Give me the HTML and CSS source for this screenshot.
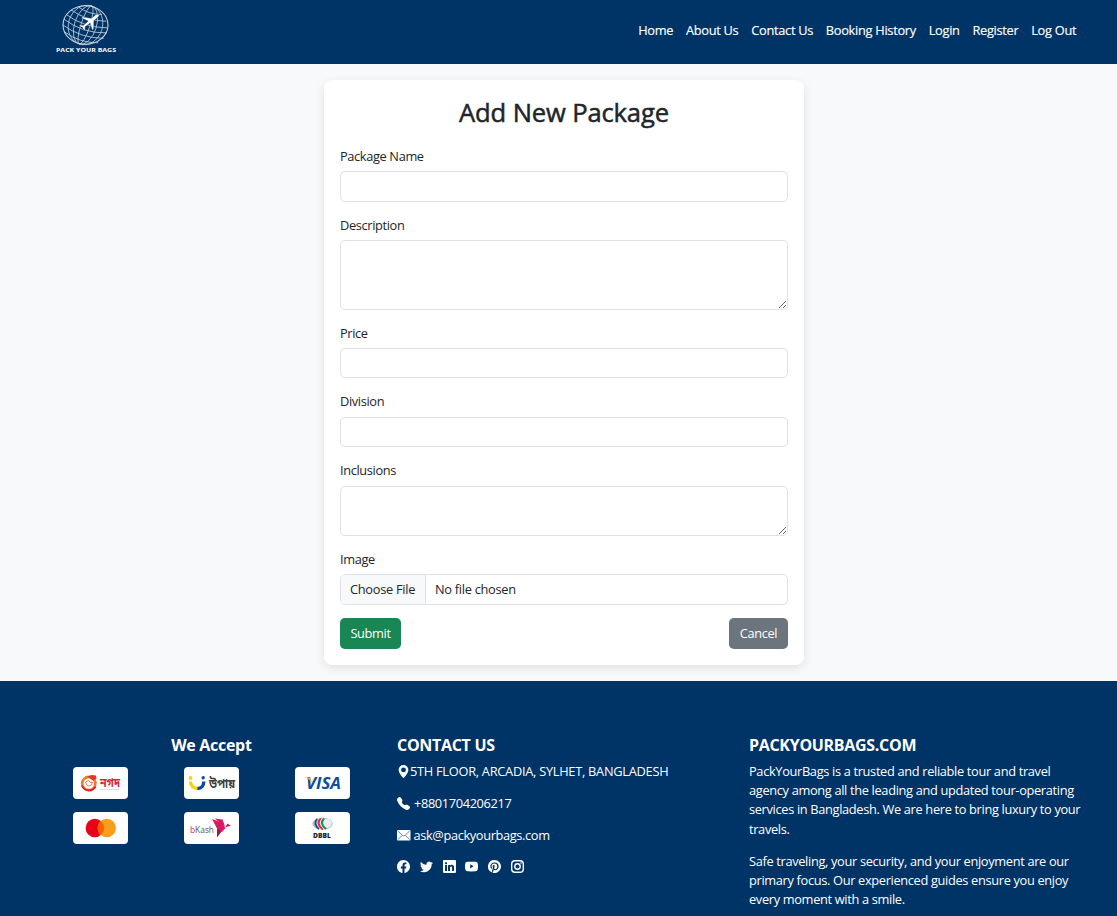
FILE: index.html
```html
<!DOCTYPE html>
<html lang="en">
<head>
<meta charset="utf-8">
<title>Add New Package</title>
<link rel="stylesheet" href="styles.css">
</head>
<body>
<header class="navbar">
  <svg class="brand" width="64" height="52" viewBox="0 0 64 52" aria-label="Pack Your Bags">
    <g fill="none" stroke="#c3d2e1" stroke-width=".75">
      <ellipse cx="32.500" cy="22" rx="22.500" ry="19.300" stroke-width="1.100"/>
      <g transform="rotate(18 32.500 22)">
        <ellipse cx="32.500" cy="22" rx="17" ry="20"/>
        <ellipse cx="32.500" cy="22" rx="11" ry="20"/>
        <ellipse cx="32.500" cy="22" rx="4.500" ry="20"/>
        <path d="M14 12q18 6 37 0M11 18q21 7 43 0M10 23q22 8 45 0M11 29q21 7 43 0M15 35q17 6 35 0M20 7q12 4 25 0"/>
      </g>
    </g>
    <path fill="#fff" stroke="#003366" stroke-width=".4" d="M46 11.500c-2-.6-3.600.3-5.200 1.800l-2.600 2-8.600-1.400-1.400 1 7 3.200-4.700 4.200-3.500-.2-.9.800 3.500 1.700 1.400 3.200 1-.7.200-3.300 5-3.700 1.900 7 1.600-1.100.2-8.500 2.600-2.100c1.700-1.400 3-2.700 2.500-3.900z"/>
    <text class="brand-text" x="3" y="49" textLength="60" lengthAdjust="spacingAndGlyphs">PACK YOUR BAGS</text>
  </svg>
  <nav class="nav">
    <a>Home</a><a>About Us</a><a>Contact Us</a><a>Booking History</a><a>Login</a><a>Register</a><a>Log Out</a>
  </nav>
</header>

<main class="main">
  <form class="card">
    <h2 class="title">Add New Package</h2>
    <div class="field"><label>Package Name</label><input class="control" type="text"></div>
    <div class="field"><label>Description</label><textarea class="control tall"></textarea></div>
    <div class="field"><label>Price</label><input class="control" type="text"></div>
    <div class="field"><label>Division</label><input class="control" type="text"></div>
    <div class="field"><label>Inclusions</label><textarea class="control short"></textarea></div>
    <div class="field"><label>Image</label>
      <div class="control file"><span class="choose">Choose File</span><span class="chosen">No file chosen</span></div>
    </div>
    <div class="actions"><button type="button" class="btn submit">Submit</button><button type="button" class="btn cancel">Cancel</button></div>
  </form>
</main>

<footer class="footer">
  <section class="col accept">
    <h5>We Accept</h5>
    <div class="logos">
      <svg class="logo" viewBox="0 0 55 32">
        <circle cx="15.800" cy="16.500" r="6.600" fill="#fff" stroke="#f07c22" stroke-width="2.600"/>
        <path d="M9 18.500a7.500 7.500 0 0 0 13.500 1.200" fill="none" stroke="#d9232e" stroke-width="1.800"/>
        <path d="M14.500 9.500l4-1.500 4.500.5.500 3.500-3.500 1.500-3-2z" fill="#e2352b"/>
        <path d="M12.500 15l3-1.500 2 2 2-.5-1 3-3 1-2-1.500z" fill="none" stroke="#ee6a4c" stroke-width=".9"/>
        <text class="bn red" x="27" y="20" textLength="20" lengthAdjust="spacingAndGlyphs">নগদ</text>
        <path d="M27 22.500h20" stroke="#bbb" stroke-width=".7" stroke-dasharray="1.500 .7"/>
      </svg>
      <svg class="logo" viewBox="0 0 55 32">
        <path d="M6.500 14.500c0 4 3 7 7.500 7" fill="none" stroke="#fbd205" stroke-width="3.300"/>
        <path d="M13.500 21.500c4.200 0 6.300-3 6.300-7" fill="none" stroke="#0b4ca0" stroke-width="3.300"/>
        <circle cx="6.500" cy="11" r="1.900" fill="#fbd205"/><circle cx="19.200" cy="10.800" r="1.700" fill="#0b4ca0"/>
        <text class="bn dark" x="25" y="20.800" textLength="26" lengthAdjust="spacingAndGlyphs">উপায়</text>
      </svg>
      <svg class="logo" viewBox="0 0 55 32">
        <text class="visa" x="11" y="21.700" textLength="35" lengthAdjust="spacingAndGlyphs">VISA</text>
        <path d="M9.500 10.500h4.300c1.200 0 1.700.5 2 1.500l.7 3.600c-1.500-2.600-3.800-4.200-7-5.100z" fill="#f5a21b"/>
      </svg>
      <svg class="logo" viewBox="0 0 55 32">
        <circle cx="21.800" cy="16" r="9.200" fill="#eb001b"/><circle cx="33.800" cy="16" r="9.200" fill="#f79e1b"/>
        <path d="M27.800 9a9.200 9.200 0 0 1 0 14 9.200 9.200 0 0 1 0-14z" fill="#ff5f00"/>
      </svg>
      <svg class="logo" viewBox="0 0 55 32">
        <text class="bkash" x="6" y="20.800" textLength="24" lengthAdjust="spacingAndGlyphs"><tspan fill="#e2136e">b</tspan>Kash</text>
        <path d="M28 7l12 4.500-1.500 5.500-5.500-.5z" fill="#d12053"/>
        <path d="M30.500 6.500l8 1 2.500 7z" fill="#e2136e"/>
        <path d="M33 16.500l6.500.5-6.500 8.500z" fill="#9e1638"/>
        <path d="M33 16.500l6-4 2.500 3.500-3.500 4z" fill="#e2136e"/>
        <path d="M41 15.500l2.500-4 3.500 2.500-3 .5z" fill="#d12053"/>
      </svg>
      <svg class="logo" viewBox="0 0 55 32">
        <ellipse cx="27.500" cy="11.600" rx="10.200" ry="6.200" fill="#b9bdc1"/>
        <ellipse cx="31.500" cy="11.300" rx="5.200" ry="4.600" fill="#eceeef"/>
        <g fill="none" stroke-width="2.200"><path d="M22.500 7q-4.500 4.500 1.500 10" stroke="#174a91"/><path d="M25.800 6.500q-5.500 5 2 11" stroke="#e72c2d"/><path d="M29 6.500q-5 5 2 10.500" stroke="#169461"/></g>
        <path d="M24.200 6q-5.500 5.500 1.700 11.500M27.500 6q-5.500 5.500 2 11.500" fill="none" stroke="#fff" stroke-width=".7"/>
        <text class="dbbl" x="18" y="26.300" textLength="18" lengthAdjust="spacingAndGlyphs">DBBL</text>
      </svg>
    </div>
  </section>
  <section class="col contact">
    <h5>CONTACT US</h5>
    <p><svg class="ic" viewBox="0 0 16 16"><path d="M8 16s6-5.686 6-10A6 6 0 0 0 2 6c0 4.314 6 10 6 10m0-7a3 3 0 1 1 0-6 3 3 0 0 1 0 6"/></svg><span class="address">5TH FLOOR, ARCADIA, SYLHET, BANGLADESH</span></p>
    <p class="spaced"><svg class="ic" viewBox="0 0 16 16"><path d="M1.885.511a1.745 1.745 0 0 1 2.610.163L6.290 2.980c.329.423.445.974.315 1.494l-.547 2.190a.68.68 0 0 0 .178.643l2.457 2.457a.68.68 0 0 0 .644.178l2.189-.547a1.750 1.750 0 0 1 1.494.315l2.306 1.794c.829.645.905 1.870.163 2.611l-1.034 1.034c-.74.74-1.846 1.065-2.877.702a18.600 18.600 0 0 1-7.010-4.420 18.600 18.600 0 0 1-4.420-7.009c-.362-1.030-.037-2.137.703-2.877z"/></svg><span class="phone">+8801704206217</span></p>
    <p class="spaced"><svg class="ic mail" viewBox="0 0 14 13"><rect x="0" y="1" width="13.500" height="10.500" rx=".8"/><path d="M.8 2l4.700 4.300q1.250 1 2.500 0L12.700 2M.8 10.500l4.400-4M12.700 10.500l-4.400-4" fill="none" stroke="#4d7094" stroke-width=".8"/></svg><span class="email">ask@packyourbags.com</span></p>
    <div class="social">
      <svg class="ic" viewBox="0 0 16 16"><path d="M16 8.049c0-4.446-3.582-8.050-8-8.050C3.580 0-.002 3.603-.002 8.050c0 4.017 2.926 7.347 6.750 7.951v-5.625h-2.030V8.050H6.750V6.275c0-2.017 1.195-3.131 3.022-3.131.876 0 1.791.157 1.791.157v1.980h-1.009c-.993 0-1.303.621-1.303 1.258v1.510h2.218l-.354 2.326H9.250V16c3.824-.604 6.750-3.934 6.750-7.951"/></svg>
      <svg class="ic" viewBox="0 0 16 16"><path d="M5.026 15c6.038 0 9.341-5.003 9.341-9.334q.002-.211-.006-.422A6.700 6.700 0 0 0 16 3.542a6.700 6.700 0 0 1-1.889.518 3.300 3.300 0 0 0 1.447-1.817 6.500 6.500 0 0 1-2.087.793A3.286 3.286 0 0 0 7.875 6.030a9.320 9.320 0 0 1-6.767-3.429 3.290 3.290 0 0 0 1.018 4.382A3.300 3.300 0 0 1 .64 6.575v.045a3.290 3.290 0 0 0 2.632 3.218 3.200 3.200 0 0 1-.865.115 3 3 0 0 1-.614-.057 3.280 3.280 0 0 0 3.067 2.277A6.600 6.600 0 0 1 .78 13.580a6 6 0 0 1-.78-.045A9.340 9.340 0 0 0 5.026 15"/></svg>
      <svg class="ic" viewBox="0 0 16 16"><path d="M0 1.146C0 .513.526 0 1.175 0h13.650C15.474 0 16 .513 16 1.146v13.708c0 .633-.526 1.146-1.175 1.146H1.175C.526 16 0 15.487 0 14.854zm4.943 12.248V6.169H2.542v7.225zm-1.200-8.212c.837 0 1.358-.554 1.358-1.248-.015-.709-.52-1.248-1.342-1.248S2.400 3.226 2.400 3.934c0 .694.521 1.248 1.327 1.248zm4.908 8.212V9.359c0-.216.016-.432.08-.586.173-.431.568-.878 1.232-.878.869 0 1.216.662 1.216 1.634v3.865h2.401V9.250c0-2.220-1.184-3.252-2.764-3.252-1.274 0-1.845.7-2.165 1.193v.025h-.016l.016-.025V6.169h-2.400c.03.678 0 7.225 0 7.225z"/></svg>
      <svg class="ic" viewBox="0 0 16 16"><path fill-rule="evenodd" d="M3 2.200Q8 1.800 13 2.200Q15.600 2.400 15.800 4.800Q16.200 8 15.800 11.200Q15.600 13.600 13 13.800Q8 14.200 3 13.800Q.4 13.600.2 11.200Q-.2 8 .2 4.800Q.4 2.400 3 2.200zM6.400 5.200v5.200L10.600 7.800z"/></svg>
      <svg class="ic" viewBox="0 0 16 16"><path d="M8 0a8 8 0 0 0-2.915 15.452c-.07-.633-.134-1.606.027-2.297.146-.625.938-3.977.938-3.977s-.239-.479-.239-1.187c0-1.113.645-1.943 1.448-1.943.682 0 1.012.512 1.012 1.127 0 .686-.437 1.712-.663 2.663-.188.796.4 1.446 1.185 1.446 1.422 0 2.515-1.500 2.515-3.664 0-1.915-1.377-3.254-3.342-3.254-2.276 0-3.612 1.707-3.612 3.471 0 .688.265 1.425.595 1.826a.24.24 0 0 1 .056.230c-.061.252-.196.796-.222.907-.035.146-.116.177-.268.107-1-.465-1.624-1.926-1.624-3.100 0-2.523 1.834-4.840 5.286-4.840 2.775 0 4.932 1.977 4.932 4.620 0 2.757-1.739 4.976-4.151 4.976-.811 0-1.573-.421-1.834-.919l-.498 1.902c-.181.695-.669 1.566-.995 2.097A8 8 0 1 0 8 0"/></svg>
      <svg class="ic" viewBox="0 0 16 16"><g fill="none" stroke="#fff" stroke-width="1.700"><rect x=".85" y=".85" width="14.300" height="14.300" rx="4"/><circle cx="8" cy="8" r="3.350"/></g><circle cx="12.300" cy="3.700" r="1"/></svg>
    </div>
  </section>
  <section class="col about">
    <h5>PACKYOURBAGS.COM</h5>
    <p>PackYourBags is a trusted and reliable tour and travel<br>agency among all the leading and updated tour-operating<br>services in Bangladesh. We are here to bring luxury to your<br>travels.</p>
    <p class="spaced">Safe traveling, your security, and your enjoyment are our<br>primary focus. Our experienced guides ensure you enjoy<br>every moment with a smile.</p>
  </section>
</footer>
</body>
</html>
```
FILE: styles.css
```css
* { box-sizing: border-box; }
body {
  margin: 0;
  height: 916px;
  overflow: hidden;
  background: #f8f9fa;
  color: #212529;
  font: 400 12.8px/19.2px "Open Sans", "Noto Sans", sans-serif;
  letter-spacing: -0.36px;
}
h2, h5, p { margin: 0; }
.navbar {
  display: flex;
  justify-content: space-between;
  align-items: flex-start;
  height: 64px;
  padding: 3px 34.400px 0 53px;
  background: #003366;
}
.brand { display: block; }
.brand-text { font: 700 6px "Open Sans", sans-serif; letter-spacing: 0; fill: #fff; }
.nav { display: flex; padding-top: 18px; color: #fff; letter-spacing: -0.29px; -webkit-text-stroke: 0.15px #fff; }
.nav a { padding: 0 6.400px; white-space: nowrap; }
.main { display: flex; justify-content: center; padding: 16px 0 16px 11px; }
.card {
  width: 480px;
  height: 585px;
  padding: 16px;
  background: #fff;
  border-radius: 8px;
  box-shadow: 0 3px 10px rgba(0, 0, 0, 0.1);
}
.title {
  height: 30.700px;
  margin-bottom: 18.700px;
  padding-top: 2px;
  text-align: center;
  font-size: 25.600px;
  line-height: 30.700px;
  font-weight: 500;
  letter-spacing: -0.15px;
  -webkit-text-stroke: 0.5px #212529;
}
.field { margin-bottom: 12.800px; }
.field label { display: block; height: 19.200px; margin-bottom: 6.400px; padding-top: 1.200px; }
.control {
  display: block;
  width: 100%;
  height: 30.600px;
  border: 1px solid #dee2e6;
  border-radius: 4.800px;
  background: #fff;
  outline: none;
}
.tall { height: 69.600px; }
.short { height: 50.200px; }
.file { display: flex; height: 30.400px; overflow: hidden; line-height: 28px; letter-spacing: -0.28px; }
.choose { width: 85px; padding-left: 9px; background: #f8f9fa; border-right: 1px solid #dee2e6; }
.chosen { padding-left: 9px; }
.actions { display: flex; justify-content: space-between; }
.btn {
  height: 31px;
  padding: 1px 0 0;
  border: 0;
  border-radius: 4.800px;
  color: #fff;
  font: inherit;
  letter-spacing: inherit;
}
.submit { width: 61px; background: #198754; }
.cancel { width: 59px; background: #6c757d; }
.footer {
  display: flex;
  height: 235px;
  padding: 54px 25px 0 35.400px;
  background: #003366;
  color: #fff;
}
.col { width: 352px; padding: 0 9.600px; white-space: nowrap; }
.col h5 { height: 27px; font-size: 16px; line-height: 21px; font-weight: 700; letter-spacing: -0.3px; }
.accept h5 { text-align: center; height: 32px; }
.logos { display: grid; grid-template-columns: repeat(3, 111px); row-gap: 13px; justify-items: center; }
.logo { display: block; width: 55px; height: 32px; background: #fff; border-radius: 4px; letter-spacing: 0; }
.bn { font: 700 12.500px "Noto Sans Bengali", "Noto Sans", sans-serif; }
.red { fill: #d9232e; }
.dark { fill: #3b3b3b; }
.visa { font: italic 700 15.500px "Open Sans", sans-serif; fill: #0e4f9d; }
.bkash { font: 400 9.500px "Open Sans", sans-serif; fill: #555; }
.dbbl { font: 800 6.500px "Open Sans", sans-serif; fill: #222; }
.contact p { display: flex; align-items: center; }
.col .spaced { margin-top: 12.800px; }
.ic { display: block; width: 13px; height: 13px; fill: #fff; flex: none; }
.mail { width: 14px; }
.address { letter-spacing: -0.27px; }
.phone { margin-left: 4px; }
.email { margin-left: 2.500px; }
.social { display: flex; gap: 9.800px; margin-top: 15px; }
.about { letter-spacing: -0.33px; }
```
